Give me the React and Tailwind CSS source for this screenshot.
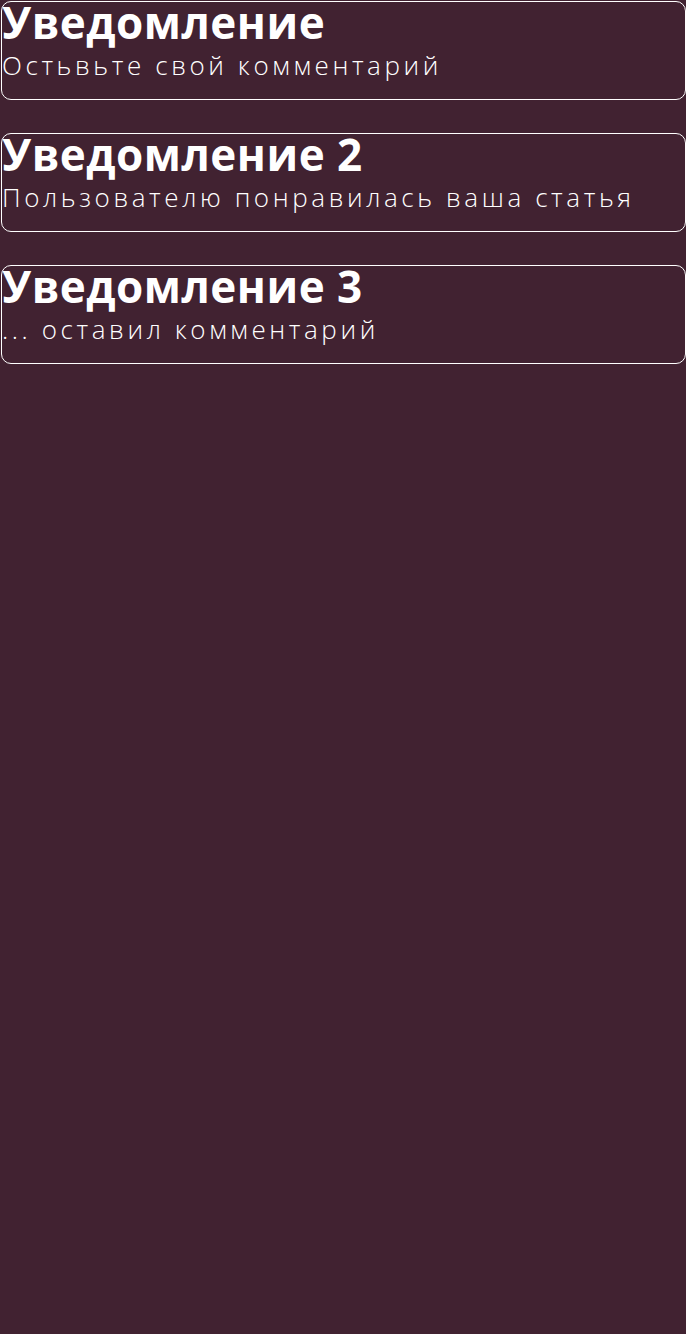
const notifications = [
  { title: "Уведомление", text: "Остьвьте свой комментарий" },
  { title: "Уведомление 2", text: "Пользователю понравилась ваша статья" },
  { title: "Уведомление 3", text: "... оставил комментарий" },
];

const NotificationCard = ({ title, text }) => {
  return (
    <div className="h-[99px] border border-white rounded-[10px] bg-[#412231] text-white">
      <div className="text-[44px] leading-[40px] font-bold tracking-[0.5px] whitespace-nowrap">
        {title}
      </div>
      <div className="mt-[9px] text-[26px] leading-[28px] font-light tracking-[3.6px] whitespace-nowrap">
        {text}
      </div>
    </div>
  );
};

export default function App() {
  return (
    <div
      className="min-h-[1334px] w-[686px] bg-[#412231] pl-px pt-px flex flex-col gap-[33px]"
      style={{ fontFamily: '"Open Sans", "Noto Sans", sans-serif' }}
    >
      {notifications.map((n, i) => (
        <NotificationCard key={i} title={n.title} text={n.text} />
      ))}
    </div>
  );
}
